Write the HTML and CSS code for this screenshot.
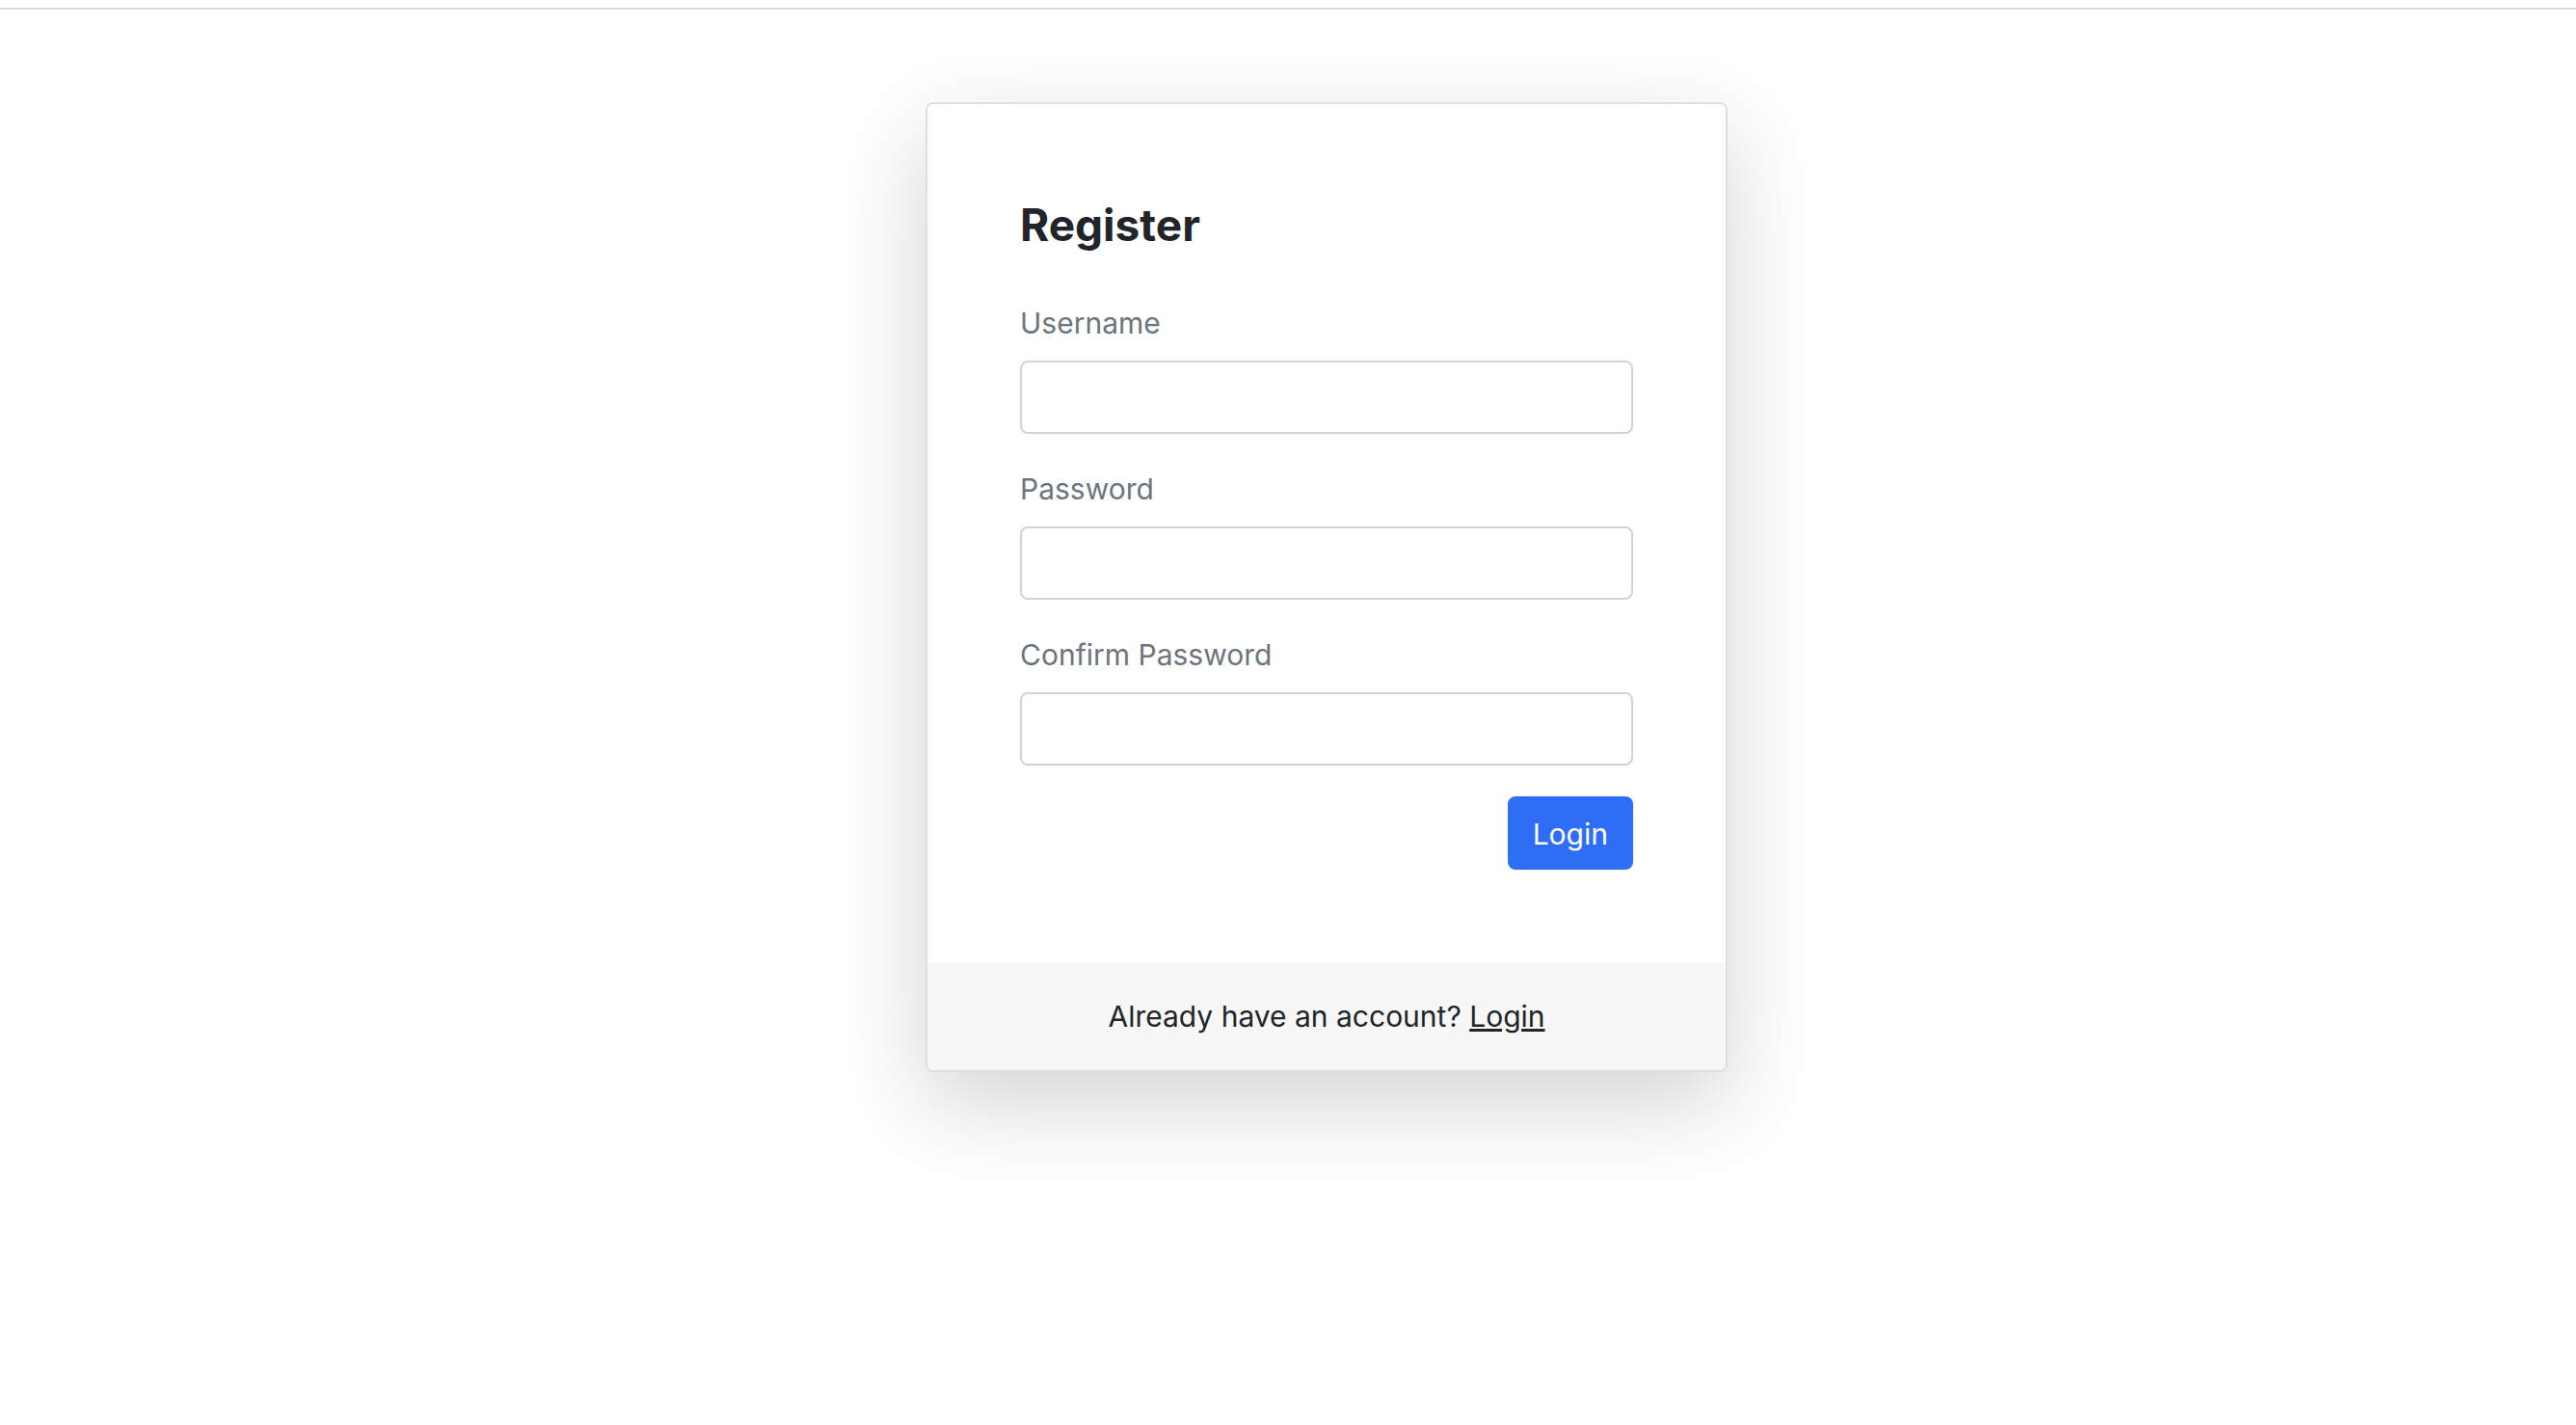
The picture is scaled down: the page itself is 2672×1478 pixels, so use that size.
FILE: index.html
```html
<!DOCTYPE html>
<html lang="en">
<head>
  <meta charset="utf-8">
  <meta name="viewport" content="width=device-width, initial-scale=1">
  <title>Register</title>
  <link rel="stylesheet" href="styles.css">
</head>
<body>
  <header class="topbar"></header>
  <main class="page">
    <section class="card">
      <div class="card-body">
        <h1 class="title">Register</h1>
        <form class="form">
          <div class="field">
            <label for="username">Username</label>
            <input id="username" type="text" name="username">
          </div>
          <div class="field">
            <label for="password">Password</label>
            <input id="password" type="password" name="password">
          </div>
          <div class="field">
            <label for="confirm">Confirm Password</label>
            <input id="confirm" type="password" name="confirm">
          </div>
          <button class="submit" type="submit">Login</button>
        </form>
      </div>
      <footer class="card-footer">Already have an account? <a href="#">Login</a></footer>
    </section>
  </main>
</body>
</html>
```
FILE: styles.css
```css
* {
  box-sizing: border-box;
}

body {
  display: flex;
  flex-direction: column;
  min-height: 100vh;
  margin: 0;
  background: #fff;
  color: #212529;
  font-family: Inter, "Liberation Sans", sans-serif;
  font-size: 30px;
  line-height: 48px;
}

.topbar {
  height: 10px;
  border-bottom: 2px solid #dcdcdc;
}

.page {
  display: flex;
  flex: 1;
  align-items: flex-start;
  justify-content: center;
  padding: 96px 24px 96px 104px;
}

.card {
  width: 100%;
  max-width: 832px;
  border: 2px solid #dfdfdf;
  border-radius: 8px;
  background: #fff;
  box-shadow: 0 32px 96px rgba(0, 0, 0, 0.175);
}

.card-body {
  padding: 96px;
}

.title {
  margin: 0 0 48px;
  font-size: 46px;
  font-weight: 700;
  line-height: 58px;
}

.form,
.field {
  display: flex;
  flex-direction: column;
}

.form {
  gap: 32px;
}

.field {
  gap: 14px;
  color: #6c757d;
  line-height: 50px;
}

.field input {
  width: 100%;
  height: 76px;
  padding: 12px 24px;
  border: 2px solid #ced4da;
  border-radius: 8px;
  background: #fff;
  color: #212529;
  font: inherit;
}

.submit {
  align-self: flex-end;
  height: 76px;
  padding: 2px 24px 0;
  border: 2px solid #306df6;
  border-radius: 8px;
  background: #306df6;
  color: #fff;
  font: inherit;
}

.card-footer {
  padding: 32px;
  border-radius: 0 0 6px 6px;
  background: #f7f7f7;
  text-align: center;
}

.card-footer a {
  color: inherit;
  text-decoration-thickness: 3px;
}
```
